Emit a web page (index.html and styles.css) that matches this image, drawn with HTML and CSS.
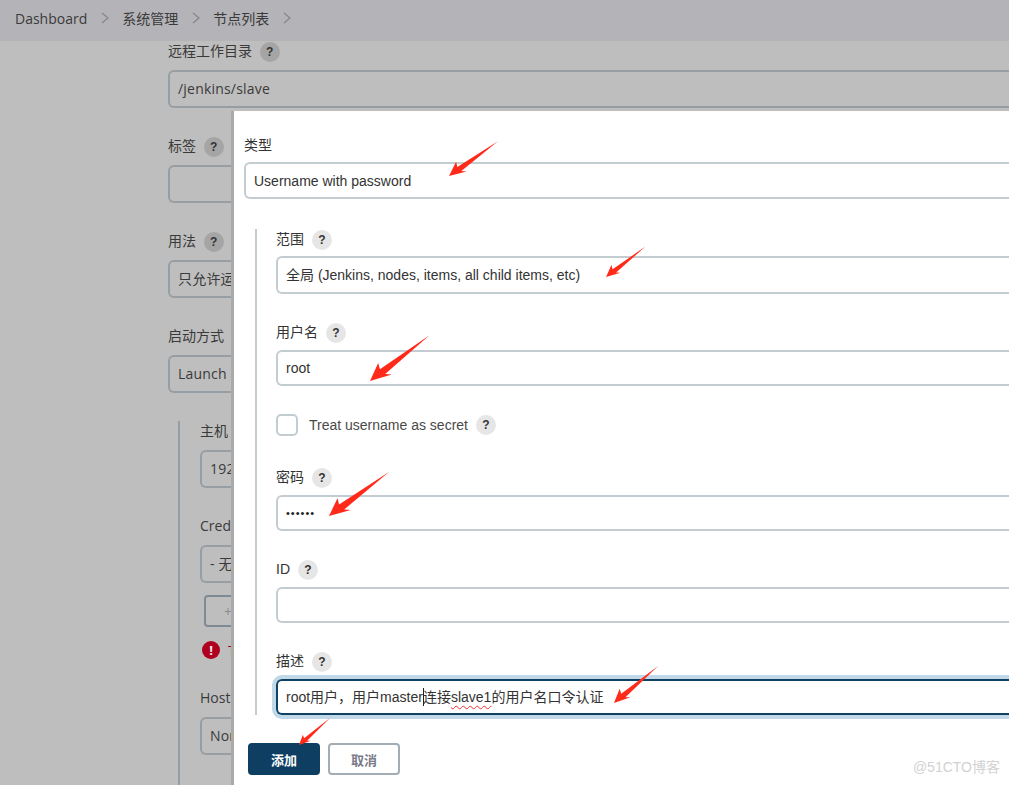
FILE: index.html
```html
<!DOCTYPE html>
<html lang="en">
<head>
    <meta charset="UTF-8">
    <meta name="viewport" content="width=device-width, initial-scale=1.0">
    <title>节点列表</title>
    <link rel="stylesheet" href="styles.css">
</head>
<body>
    <header class="crumbs">
        <a href="#">Dashboard</a>
        <svg class="chev" viewBox="0 0 8 12"><path d="M1 1l6 5-6 5"/></svg>
        <a href="#">系统管理</a>
        <svg class="chev" viewBox="0 0 8 12"><path d="M1 1l6 5-6 5"/></svg>
        <a href="#">节点列表</a>
        <svg class="chev" viewBox="0 0 8 12"><path d="M1 1l6 5-6 5"/></svg>
    </header>

    <main class="page-form">
        <div class="bg-row">
            <label>远程工作目录 <span class="help">?</span></label>
            <div class="bg-field">/jenkins/slave</div>
        </div>
        <div class="bg-row">
            <label>标签 <span class="help">?</span></label>
            <div class="bg-field"></div>
        </div>
        <div class="bg-row">
            <label>用法 <span class="help">?</span></label>
            <div class="bg-field">只允许运行绑定到这台机器的Job</div>
        </div>
        <div class="bg-row">
            <label>启动方式 <span class="help">?</span></label>
            <div class="bg-field">Launch agents via SSH</div>
        </div>
        <div class="bg-nested">
            <div class="bg-row">
                <label>主机</label>
                <div class="bg-field">192.168.1.10</div>
            </div>
            <div class="bg-row">
                <label>Credentials</label>
                <div class="bg-field">- 无 -</div>
            </div>
            <button class="bg-add">+ 添加</button>
            <p class="bg-error"><span class="err-icon">!</span>The selected credentials cannot be found</p>
            <div class="bg-row last">
                <label>Host Key Verification</label>
                <div class="bg-field">None</div>
            </div>
        </div>
    </main>

    <section class="modal">
        <div class="type-row">
            <label>类型</label>
            <div class="field type-field">Username with password</div>
        </div>
        <div class="nested">
            <div class="row">
                <label class="first-label">范围 <span class="help light">?</span></label>
                <div class="field tall">全局 (Jenkins, nodes, items, all child items, etc)</div>
            </div>
            <div class="row">
                <label>用户名 <span class="help light">?</span></label>
                <div class="field">root</div>
            </div>
            <div class="check-row">
                <span class="check"></span>
                <span class="check-text">Treat username as secret</span>
                <span class="help light">?</span>
            </div>
            <div class="row">
                <label>密码 <span class="help light">?</span></label>
                <div class="field dots">••••••</div>
            </div>
            <div class="row">
                <label>ID <span class="help light">?</span></label>
                <div class="field"></div>
            </div>
            <div class="row last">
                <label>描述 <span class="help light">?</span></label>
                <div class="field focused">root用户，用户master<span class="caret"></span>连接<span class="typo">slave1</span>的用户名口令认证</div>
            </div>
        </div>
        <div class="actions">
            <button class="btn primary">添加</button>
            <button class="btn">取消</button>
        </div>
    </section>

    <svg class="arrows" width="1009" height="785" viewBox="0 0 1009 785">
        <defs>
            <polygon id="arrow" points="0,0 14,-7.5 12,-2.6 60,0 13,3 17,6.5"/>
        </defs>
        <use href="#arrow" transform="translate(449 176) rotate(-35.3)"/>
        <use href="#arrow" transform="translate(606 277) rotate(-37.6) scale(.83)"/>
        <use href="#arrow" transform="translate(370 381) rotate(-37.5) scale(1.25)"/>
        <use href="#arrow" transform="translate(329 516) rotate(-36.3) scale(1.24)"/>
        <use href="#arrow" transform="translate(614 703) rotate(-40) scale(.96)"/>
        <use href="#arrow" transform="translate(299 745) rotate(-41) scale(.69)"/>
    </svg>

    <div class="watermark">@51CTO博客</div>
</body>
</html>
```

FILE: styles.css
```css
html, body { height: 100%; overflow: hidden; }
body { margin: 0; position: relative; background-color: #bebebe; color: #333; font-family: "Liberation Sans", "Noto Sans CJK SC", sans-serif; font-size: 14px; }
button { font-family: inherit; }
label { display: block; }

.crumbs { height: 36px; padding: 0 0 5px 15px; display: flex; align-items: center; background-color: #b4b4b8; font-family: "Open Sans", "Noto Sans CJK SC", sans-serif; font-size: 14px; }
.crumbs a { color: #3a3a3a; text-decoration: none; }
.chev { width: 8px; height: 12px; margin: 0 13.5px; fill: none; stroke: #85858a; stroke-width: 1.2; }

.help { display: inline-flex; align-items: center; justify-content: center; width: 20px; height: 20px; margin-left: 4px; border-radius: 50%; background-color: #a5a5a5; color: #333; font-family: "Liberation Sans", sans-serif; font-size: 12px; font-weight: bold; }
.help.light { background-color: #e6e6e6; }

/* dimmed form behind the dialog */
.page-form { padding: 0 0 0 168px; color: #3a3a3a; font-family: "Open Sans", "Noto Sans CJK SC", sans-serif; }
.bg-row { margin-bottom: 28px; }
.bg-row.last { margin-bottom: 0; }
.bg-row label { height: 29px; line-height: 20px; white-space: nowrap; }
.bg-field { box-sizing: border-box; height: 38px; padding: 0 8px; border: 2px solid #979ea3; border-right: 0; border-radius: 6px 0 0 6px; line-height: 34px; white-space: nowrap; overflow: hidden; letter-spacing: .2px; }
.bg-nested { box-sizing: border-box; height: 364px; margin-left: 10px; padding-left: 20px; border-left: 2px solid #979ea3; }
.bg-add { display: block; box-sizing: border-box; width: 120px; height: 32px; margin: -16px 0 0 4px; padding-left: 18px; border: 2px solid #7f8a92; border-radius: 4px; background: none; color: #8b8b8b; text-align: left; font-size: 14px; }
.bg-error { display: flex; align-items: center; gap: 8px; height: 18px; margin: 14px 0 29px 2px; color: #b0001f; white-space: nowrap; overflow: hidden; }
.err-icon { width: 18px; height: 18px; border-radius: 50%; background-color: #b0001f; color: #e8e8e8; text-align: center; line-height: 18px; font-weight: bold; font-size: 13px; }

/* credentials dialog */
.modal { position: absolute; left: 234px; top: 111px; right: 0; bottom: 0; box-sizing: border-box; padding: 24px 0 0 10px; background-color: #fff; box-shadow: -3px 0 0 #aaa; }
.type-row label { height: 27px; line-height: 20px; }
.field { box-sizing: border-box; height: 36px; padding: 0 8px; border: 2px solid #c3cdd1; border-right: 0; border-radius: 6px 0 0 6px; line-height: 32px; white-space: nowrap; color: #333; }
.field.type-field { height: 37px; line-height: 35px; }
.field.tall { height: 38px; line-height: 34px; }
.nested { margin: 30px 0 0 11px; padding: 0 0 0 19px; border-left: 2px solid #c3cdd1; }
.row { margin-bottom: 28px; }
.row.last { margin-bottom: 0; }
.row label { height: 28px; line-height: 20px; }
.row .first-label { height: 27px; }
.check-row { display: flex; align-items: center; height: 22px; margin-bottom: 31px; }
.check { box-sizing: border-box; width: 22px; height: 22px; border: 2px solid #c3cdd1; border-radius: 5px; }
.check-text { margin-left: 11px; color: #4a4a4a; }
.check-row .help { margin-left: 8px; }
.dots { color: #222; font-size: 11px; letter-spacing: 1px; }
.field.focused { border-color: #0e4164; box-shadow: 0 0 0 4px #c0d8e8; clip-path: inset(-4px 0 -4px -4px); }
.caret { display: inline-block; width: 1px; height: 18px; margin-right: -1px; background-color: #222; vertical-align: -4px; }
.typo { text-decoration: underline wavy #f03030 1px; text-underline-offset: 3px; }

.actions { display: flex; gap: 8px; margin: 28px 0 0 4px; }
.btn { box-sizing: border-box; width: 72px; height: 32px; border: 2px solid #a3adb6; border-radius: 4px; background-color: #fff; color: #7a7a8a; font-size: 13px; font-weight: bold; }
.btn.primary { border-color: #0e3f62; background-color: #0e3f62; color: #fff; }

.arrows { position: absolute; left: 0; top: 0; fill: #ff2a1a; pointer-events: none; }
.watermark { position: absolute; right: 9px; bottom: 9px; color: #d2d2d2; font-size: 14px; }
```
